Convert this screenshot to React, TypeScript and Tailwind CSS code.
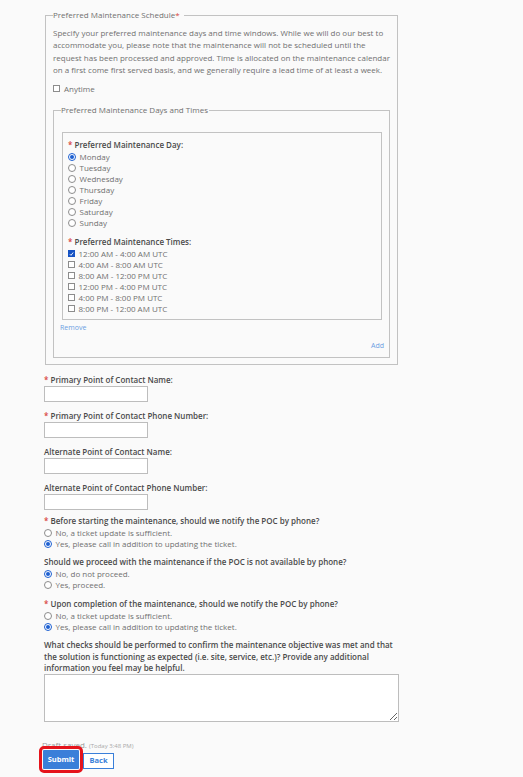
import React from "react";

function Radio({ checked }: { checked?: boolean }) {
  return (
    <span
      className={`w-[8px] h-[8px] rounded-full border bg-white flex items-center justify-center shrink-0 ${
        checked ? "border-[#1c5fd1]" : "border-[#8c8c8c]"
      }`}
    >
      {checked && <span className="w-[4px] h-[4px] rounded-full bg-[#1c5fd1]" />}
    </span>
  );
}

function Box({ checked }: { checked?: boolean }) {
  return (
    <span
      className={`w-[7px] h-[7px] border flex items-center justify-center shrink-0 ${
        checked ? "border-[#1552c4] bg-[#1552c4]" : "border-[#8c8c8c] bg-white"
      }`}
    >
      {checked && (
        <svg width="6" height="6" viewBox="0 0 6 6">
          <path d="M1 3.2 L2.4 4.6 L5 1.2" stroke="white" strokeWidth="1.1" fill="none" />
        </svg>
      )}
    </span>
  );
}

function Option({ label, checked, type }: { label: string; checked?: boolean; type: "radio" | "box" }) {
  return (
    <div className="flex items-center gap-[3.5px] h-[11px] leading-[11px] text-[#707070]">
      {type === "radio" ? <Radio checked={checked} /> : <Box checked={checked} />}
      <span>{label}</span>
    </div>
  );
}

function Label({ text, required, className = "" }: { text: string; required?: boolean; className?: string }) {
  return (
    <div className={`leading-[12px] font-semibold text-[#4a4a4a] ${className}`}>
      {required && <span className="text-[#d8433a]">* </span>}
      {text}
    </div>
  );
}

function TextField({ label, required }: { label: string; required?: boolean }) {
  return (
    <div className="mb-[8px]">
      <div className="leading-[11px] h-[11px] font-semibold text-[#4a4a4a] mb-[1px]">
        {required && <span className="text-[#d8433a]">* </span>}
        {label}
      </div>
      <input className="block w-[104px] h-[16px] bg-white border border-[#bdbdbd] outline-none" />
    </div>
  );
}

const days = ["Monday", "Tuesday", "Wednesday", "Thursday", "Friday", "Saturday", "Sunday"];
const times = [
  "12:00 AM - 4:00 AM UTC",
  "4:00 AM - 8:00 AM UTC",
  "8:00 AM - 12:00 PM UTC",
  "12:00 PM - 4:00 PM UTC",
  "4:00 PM - 8:00 PM UTC",
  "8:00 PM - 12:00 AM UTC",
];

export default function App() {
  return (
    <div className="min-h-[777px] bg-[#fafafa] pl-[44px] pt-[9px] font-['Open_Sans',sans-serif] text-[8px]">
      {/* Schedule */}
      <fieldset className="ml-[1px] w-[353px] border border-[#c2c2c2] pl-[7px] pr-[7px] pb-[6px]">
        <legend className="leading-[12px] text-[#707070] pr-[4px]">
          Preferred Maintenance Schedule<span className="text-[#d8433a]">*</span>
        </legend>
        <p className="mt-[6px] leading-[12.3px] text-[#707070]">
          Specify your preferred maintenance days and time windows. While we will do our best to
          accommodate you, please note that the maintenance will not be scheduled until the request has been
          processed and approved. Time is allocated on the maintenance calendar on a first come first served
          basis, and we generally require a lead time of at least a week.
        </p>
        <div className="mt-[7px] flex items-center gap-[4px] h-[11px] leading-[11px] text-[#707070]">
          <Box />
          <span>Anytime</span>
        </div>

        <fieldset className="mt-[10px] border border-[#c2c2c2] pl-[8px] pr-[7px] pb-[6px]">
          <legend className="leading-[12px] text-[#707070] pr-[1px] -ml-[1px]">Preferred Maintenance Days and Times</legend>
          <div className="mt-[16px] border border-[#c2c2c2] pl-[5px] pt-[6px] pb-[5px]">
            <Label text="Preferred Maintenance Day:" required />
            {days.map((d, i) => (
              <Option key={d} label={d} checked={i === 0} type="radio" />
            ))}
            <Label text="Preferred Maintenance Times:" required className="mt-[8px]" />
            {times.map((t, i) => (
              <Option key={t} label={t} checked={i === 0} type="box" />
            ))}
          </div>
          <div className="mt-[3px] -ml-[2px] leading-[10px] text-[7px] text-[#6c9ee2]">Remove</div>
          <div className="mt-[8px] -mr-[2px] leading-[10px] text-[7px] text-[#6c9ee2] text-right">Add</div>
        </fieldset>
      </fieldset>

      {/* Contacts */}
      <div className="mt-[9px]">
        <TextField label="Primary Point of Contact Name:" required />
        <TextField label="Primary Point of Contact Phone Number:" required />
        <TextField label="Alternate Point of Contact Name:" />
        <TextField label="Alternate Point of Contact Phone Number:" />
      </div>

      {/* Phone questions */}
      <div className="-mt-[3px]">
        <Label text="Before starting the maintenance, should we notify the POC by phone?" required />
        <Option label="No, a ticket update is sufficient." type="radio" />
        <Option label="Yes, please call in addition to updating the ticket." checked type="radio" />

        <Label text="Should we proceed with the maintenance if the POC is not available by phone?" className="mt-[7px]" />
        <Option label="No, do not proceed." checked type="radio" />
        <Option label="Yes, proceed." type="radio" />

        <Label text="Upon completion of the maintenance, should we notify the POC by phone?" required className="mt-[8px]" />
        <Option label="No, a ticket update is sufficient." type="radio" />
        <Option label="Yes, please call in addition to updating the ticket." checked type="radio" />

        <div className="mt-[7px] w-[355px] leading-[11.5px] font-semibold text-[#4a4a4a]">
          What checks should be performed to confirm the maintenance objective was met and that the solution is
          functioning as expected (i.e. site, service, etc.)? Provide any additional information you feel may be
          helpful.
        </div>
        <textarea className="block w-[355px] h-[48px] bg-white border border-[#bdbdbd] outline-none" />
      </div>

      {/* Footer */}
      <div className="mt-[18px] leading-[10px] h-[10px] text-[#9a9a9a] -ml-[2px]">
        Draft saved. <span className="text-[6px] text-[#a8a8a8]">(Today 3:48 PM)</span>
      </div>
      <div className="flex items-end gap-[4px] -ml-[1px]">
        <button className="w-[36px] h-[19px] bg-[#3a7fd9] text-white font-bold text-[7.5px] rounded-[1px] outline outline-[3px] outline-[#e5141c] outline-offset-[1px]">
          Submit
        </button>
        <button className="w-[31px] h-[16px] bg-white border border-[#3a7fd9] text-[#3a7fd9] font-bold text-[7.5px]">
          Back
        </button>
      </div>
    </div>
  );
}
